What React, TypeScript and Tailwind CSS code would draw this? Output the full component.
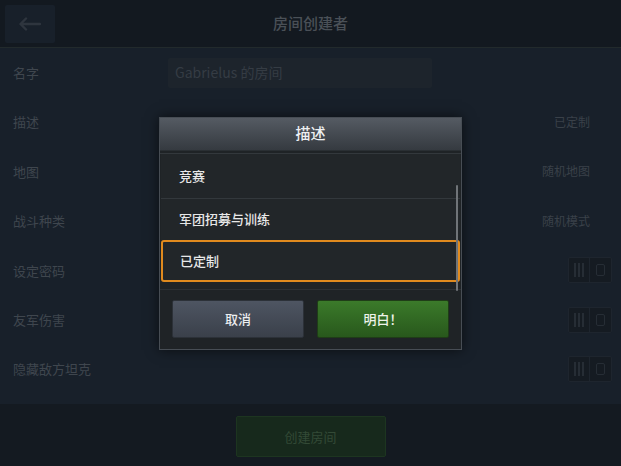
import React from 'react';

const rows = [
  { label: '名字', kind: 'input' },
  { label: '描述', kind: 'text', value: '已定制' },
  { label: '地图', kind: 'text', value: '随机地图' },
  { label: '战斗种类', kind: 'text', value: '随机模式' },
  { label: '设定密码', kind: 'toggle' },
  { label: '友军伤害', kind: 'toggle' },
  { label: '隐藏敌方坦克', kind: 'toggle' },
];

function Toggle() {
  return (
    <div className="flex h-[26px] w-[44px] items-center rounded-[2px] border border-[#1e252e] bg-[#151b22]">
      <div className="flex h-full w-1/2 items-center justify-center gap-[2px] border-r border-[#1e252e]">
        <span className="h-[14px] w-[2px] bg-[#262d35]" />
        <span className="h-[14px] w-[2px] bg-[#262d35]" />
        <span className="h-[14px] w-[2px] bg-[#262d35]" />
      </div>
      <div className="flex h-full w-1/2 items-center justify-center">
        <span className="h-[12px] w-[9px] rounded-[2px] border border-[#262d35]" />
      </div>
    </div>
  );
}

export default function App() {
  return (
    <div
      className="relative h-[466px] w-[621px] overflow-hidden bg-[#18202a] text-[#444b53]"
      style={{ fontFamily: '"Noto Sans CJK SC", "Noto Sans", sans-serif' }}
    >
      {/* header */}
      <header className="relative flex h-[48px] items-center justify-center border-b border-[#222a2c] bg-[#131920]">
        <button className="absolute left-[5px] top-[5px] flex h-[38px] w-[50px] items-center justify-center rounded-[2px] bg-[#18202a]">
          <svg width="22" height="14" viewBox="0 0 22 14" fill="none" stroke="#2e353e" strokeWidth="2.4" strokeLinecap="round" strokeLinejoin="round">
            <path d="M21 7H2M7 1.5L1.5 7L7 12.5" />
          </svg>
        </button>
        <h1 className="text-[15px] font-medium text-[#4a5057]">房间创建者</h1>
      </header>

      {/* settings rows */}
      <div className="flex flex-col">
        {rows.map((row) => (
          <div key={row.label} className="flex h-[49.4px] items-center justify-between pl-[13px] pr-[9px]">
            <span className="text-[13px] text-[#3f464e]">{row.label}</span>
            {row.kind === 'input' && (
              <div className="mr-[180px] flex h-[30px] w-[264px] items-center rounded-[2px] bg-[#1d242c] px-[7px] text-[14px] text-[#353c44]">
                Gabrielus 的房间
              </div>
            )}
            {row.kind === 'text' && <span className="pr-[22px] text-[12px] text-[#3a4149]">{row.value}</span>}
            {row.kind === 'toggle' && <Toggle />}
          </div>
        ))}
      </div>

      {/* footer */}
      <div className="absolute bottom-0 left-0 right-0 flex h-[62px] items-start justify-center bg-[#141a21] pt-[12px]">
        <button className="flex h-[41px] w-[150px] items-center justify-center rounded-[2px] border border-[#1d3520] bg-[#17291c] text-[13px] text-[#334a36]">
          创建房间
        </button>
      </div>

      {/* modal */}
      <div className="absolute inset-0 flex items-center justify-center">
        <div className="flex h-[233px] w-[303px] flex-col border border-[#474d54] bg-[#1f2326] shadow-[0_0_12px_rgba(0,0,0,0.6)]">
          <div className="flex h-[33px] items-center justify-center border-b border-[#2a2f33] bg-gradient-to-b from-[#555b63] to-[#353a40] text-[15px] font-medium text-[#eef0f2]">
            描述
          </div>
          <div className="relative mt-[2px] flex h-[136px] flex-col border-t border-[#33383c] px-[1px]">
            <div className="flex h-[45px] items-center border-b border-[#33383c] bg-[#222629] pl-[18px] text-[13px] font-medium text-[#e8e8e8]">
              竞赛
            </div>
            <div className="flex h-[41px] items-center bg-[#222629] pl-[18px] text-[13px] font-medium text-[#e8e8e8]">
              军团招募与训练
            </div>
            <div className="flex h-[42px] items-center rounded-[3px] border-2 border-[#e08a1e] bg-[#222629] pl-[17px] text-[13px] font-medium text-[#e8e8e8]">
              已定制
            </div>
            <div className="absolute right-[3px] top-[31px] h-[106px] w-[2px] rounded-full bg-[#707478]" />
          </div>
          <div className="flex flex-1 items-center justify-between border-t border-[#2c3034] px-[12px]">
            <button className="flex h-[38px] w-[132px] items-center justify-center rounded-[2px] border border-[#2c3138] bg-gradient-to-b from-[#4e5562] to-[#3a404a] text-[13px] font-medium text-[#eceef0]">
              取消
            </button>
            <button className="flex h-[38px] w-[132px] items-center justify-center rounded-[2px] border border-[#1f3d17] bg-gradient-to-b from-[#3b7a2a] to-[#28581c] text-[13px] font-medium text-[#eef3ea]">
              明白！
            </button>
          </div>
        </div>
      </div>
    </div>
  );
}
